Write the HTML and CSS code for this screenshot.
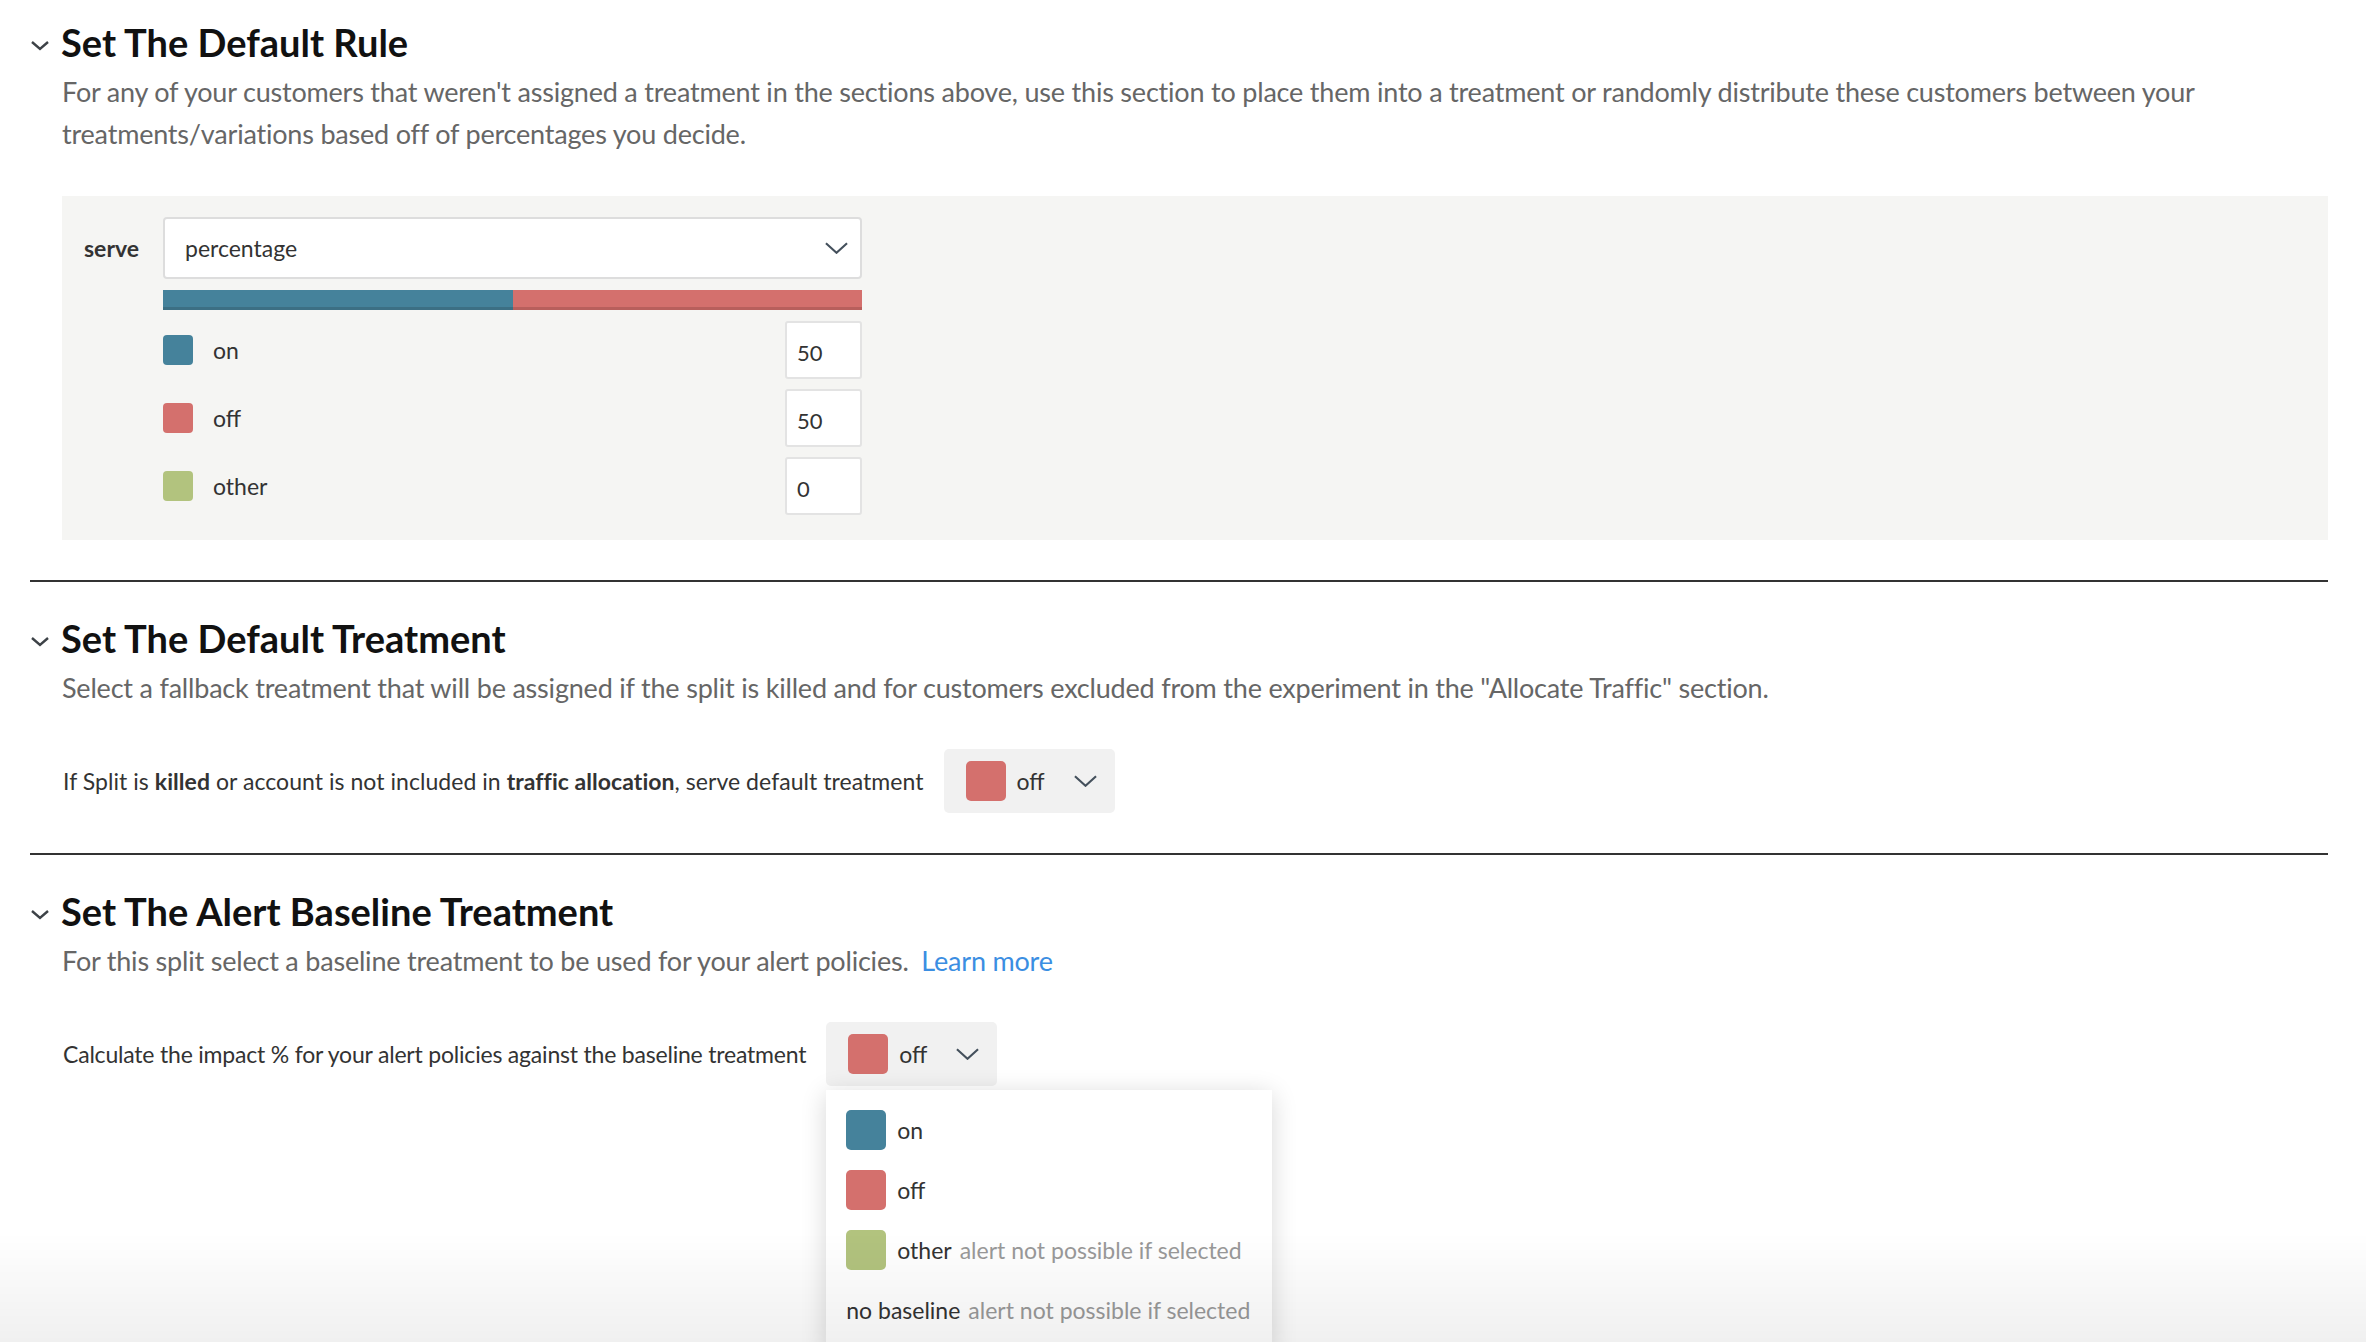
FILE: index.html
```html
<!DOCTYPE html>
<html lang="en">
<head>
    <meta charset="UTF-8">
    <title>Split - Default Rule</title>
    <link rel="stylesheet" href="styles.css">
</head>
<body>
    <div class="page">

        <section class="section">
            <div class="section-header">
                <svg class="caret" viewBox="0 0 20 11"><path d="M2 2 L10 9 L18 2"/></svg>
                <h2>Set The Default Rule</h2>
            </div>
            <p class="desc">For any of your customers that weren't assigned a treatment in the sections above, use this section to place them into a treatment or randomly distribute these customers between your treatments/variations based off of percentages you decide.</p>

            <div class="rule-box">
                <div class="serve-row">
                    <span class="serve-label">serve</span>
                    <div class="select">
                        <span>percentage</span>
                        <svg class="select-arrow" viewBox="0 0 24 12"><path d="M1 1 L12 11 L23 1"/></svg>
                    </div>
                </div>
                <div class="alloc">
                    <div class="alloc-bar">
                        <div class="seg on" style="width: 50%"></div>
                        <div class="seg off" style="width: 50%"></div>
                        <div class="seg other" style="width: 0%"></div>
                    </div>
                    <div class="alloc-row">
                        <span class="swatch on"></span>
                        <span class="alloc-name">on</span>
                        <input class="pct" type="text" value="50">
                    </div>
                    <div class="alloc-row">
                        <span class="swatch off"></span>
                        <span class="alloc-name">off</span>
                        <input class="pct" type="text" value="50">
                    </div>
                    <div class="alloc-row">
                        <span class="swatch other"></span>
                        <span class="alloc-name">other</span>
                        <input class="pct" type="text" value="0">
                    </div>
                </div>
            </div>
        </section>

        <hr class="divider">

        <section class="section">
            <div class="section-header">
                <svg class="caret" viewBox="0 0 20 11"><path d="M2 2 L10 9 L18 2"/></svg>
                <h2>Set The Default Treatment</h2>
            </div>
            <p class="desc">Select a fallback treatment that will be assigned if the split is killed and for customers excluded from the experiment in the "Allocate Traffic" section.</p>
            <div class="field-row">
                <span class="field-label">If Split is <b>killed</b> or account is not included in <b>traffic allocation</b>, serve default treatment</span>
                <div class="treat-btn">
                    <span class="swatch big off"></span>
                    <span class="treat-name">off</span>
                    <svg class="select-arrow" viewBox="0 0 24 12"><path d="M1 1 L12 11 L23 1"/></svg>
                </div>
            </div>
        </section>

        <hr class="divider">

        <section class="section">
            <div class="section-header">
                <svg class="caret" viewBox="0 0 20 11"><path d="M2 2 L10 9 L18 2"/></svg>
                <h2>Set The Alert Baseline Treatment</h2>
            </div>
            <p class="desc">For this split select a baseline treatment to be used for your alert policies. <a href="#">Learn more</a></p>
            <div class="field-row">
                <span class="field-label tight">Calculate the impact % for your alert policies against the baseline treatment</span>
                <div class="dropdown">
                    <div class="treat-btn">
                        <span class="swatch big off"></span>
                        <span class="treat-name">off</span>
                        <svg class="select-arrow" viewBox="0 0 24 12"><path d="M1 1 L12 11 L23 1"/></svg>
                    </div>
                    <div class="menu">
                        <div class="menu-item"><span class="swatch big on"></span>on</div>
                        <div class="menu-item"><span class="swatch big off"></span>off</div>
                        <div class="menu-item"><span class="swatch big other"></span>other <span class="hint">alert not possible if selected</span></div>
                        <div class="menu-item">no baseline <span class="hint">alert not possible if selected</span></div>
                    </div>
                </div>
            </div>
        </section>

    </div>
    <div class="fade"></div>
</body>
</html>
```

FILE: styles.css
```css
html, body {
    height: 100%;
}

body {
    margin: 0;
    font-family: Lato, "Noto Sans", sans-serif;
    color: #333;
    background: #fff;
}

.page {
    padding: 18px 38px 0 30px;
}

.section-header {
    display: flex;
    align-items: center;
    height: 48px;
}

.caret {
    width: 20px;
    height: 11px;
    margin: 6px 11px 0 0;
    fill: none;
    stroke: #3d4247;
    stroke-width: 2.4;
}

h2 {
    margin: 0;
    font-size: 38px;
    font-weight: 700;
    color: #111;
    letter-spacing: 0;
}

.desc {
    margin: 5px 0 0 32px;
    font-size: 27px;
    line-height: 42px;
    color: #666;
    letter-spacing: -0.2px;
}

.desc a {
    color: #3b8ee2;
    text-decoration: none;
    margin-left: 6px;
}

/* default rule box */
.rule-box {
    margin: 41px 0 0 32px;
    background: #f5f5f3;
    padding: 21px 22px 25px;
}

.serve-row {
    display: flex;
    align-items: center;
}

.serve-label {
    width: 79px;
    font-size: 23px;
    font-weight: 700;
    color: #333;
}

.select {
    display: flex;
    align-items: center;
    justify-content: space-between;
    box-sizing: border-box;
    width: 699px;
    height: 62px;
    padding: 0 12px 0 20px;
    background: #fff;
    border: 2px solid #ddd;
    border-radius: 4px;
    font-size: 23px;
}

.select-arrow {
    width: 23px;
    height: 12px;
    fill: none;
    stroke: #44505c;
    stroke-width: 2.2;
}

.alloc {
    width: 699px;
    margin-left: 79px;
}

.alloc-bar {
    display: flex;
    height: 20px;
    margin: 11px 0 11px;
}

.seg.on {
    background: #45829b;
    box-shadow: inset 0 -3px 0 #3c6f84;
}

.seg.off {
    background: #d4706d;
    box-shadow: inset 0 -3px 0 #b85f5c;
}

.seg.other {
    background: #b2c37e;
}

.alloc-row {
    display: flex;
    align-items: center;
    height: 58px;
    margin-bottom: 10px;
}

.alloc-row:last-child {
    margin-bottom: 0;
}

.alloc-name {
    flex: 1;
    margin-left: 20px;
    font-size: 23px;
}

.pct {
    box-sizing: border-box;
    width: 77px;
    height: 58px;
    padding: 4px 10px 0;
    border: 2px solid #e3e3e3;
    border-radius: 3px;
    font-family: Lato, "Noto Sans", sans-serif;
    font-size: 22px;
    color: #333;
}

.swatch {
    display: inline-block;
    width: 30px;
    height: 30px;
    border-radius: 4px;
    flex-shrink: 0;
}

.swatch.big {
    width: 40px;
    height: 40px;
    border-radius: 5px;
}

.swatch.on { background: #45829b; }
.swatch.off { background: #d4706d; }
.swatch.other { background: #b2c37e; }

.divider {
    margin: 40px 0 0;
    border: 0;
    height: 2px;
    background: #333;
}

.divider + .section {
    padding-top: 32px;
}

.field-row {
    display: flex;
    align-items: center;
    gap: 20px;
    margin: 40px 0 0 33px;
    font-size: 23px;
    color: #333;
}

.field-label {
    letter-spacing: 0.05px;
}

.field-label.tight {
    letter-spacing: -0.2px;
}

.treat-btn {
    display: flex;
    align-items: center;
    box-sizing: border-box;
    width: 171px;
    height: 64px;
    padding: 0 18px 0 22px;
    background: #f1f1f1;
    border-radius: 5px;
    font-size: 23px;
}

.treat-name {
    flex: 1;
    margin-left: 11px;
}

.dropdown {
    position: relative;
}

.menu {
    position: absolute;
    top: 68px;
    left: 0;
    z-index: 5;
    width: 446px;
    padding: 10px 0;
    background: #fff;
    box-shadow: 0 4px 24px rgba(0, 0, 0, 0.16);
}

.menu-item {
    display: flex;
    align-items: center;
    height: 40px;
    padding: 10px 20px;
    font-size: 23px;
    color: #333;
    white-space: nowrap;
}

.menu-item .swatch {
    margin-right: 11px;
}

.hint {
    margin-left: 8px;
    color: #999;
}

.fade {
    position: fixed;
    left: 0;
    right: 0;
    bottom: 0;
    height: 110px;
    background: linear-gradient(to bottom, rgba(0, 0, 0, 0), rgba(0, 0, 0, 0.06));
    pointer-events: none;
    z-index: 6;
}
```
